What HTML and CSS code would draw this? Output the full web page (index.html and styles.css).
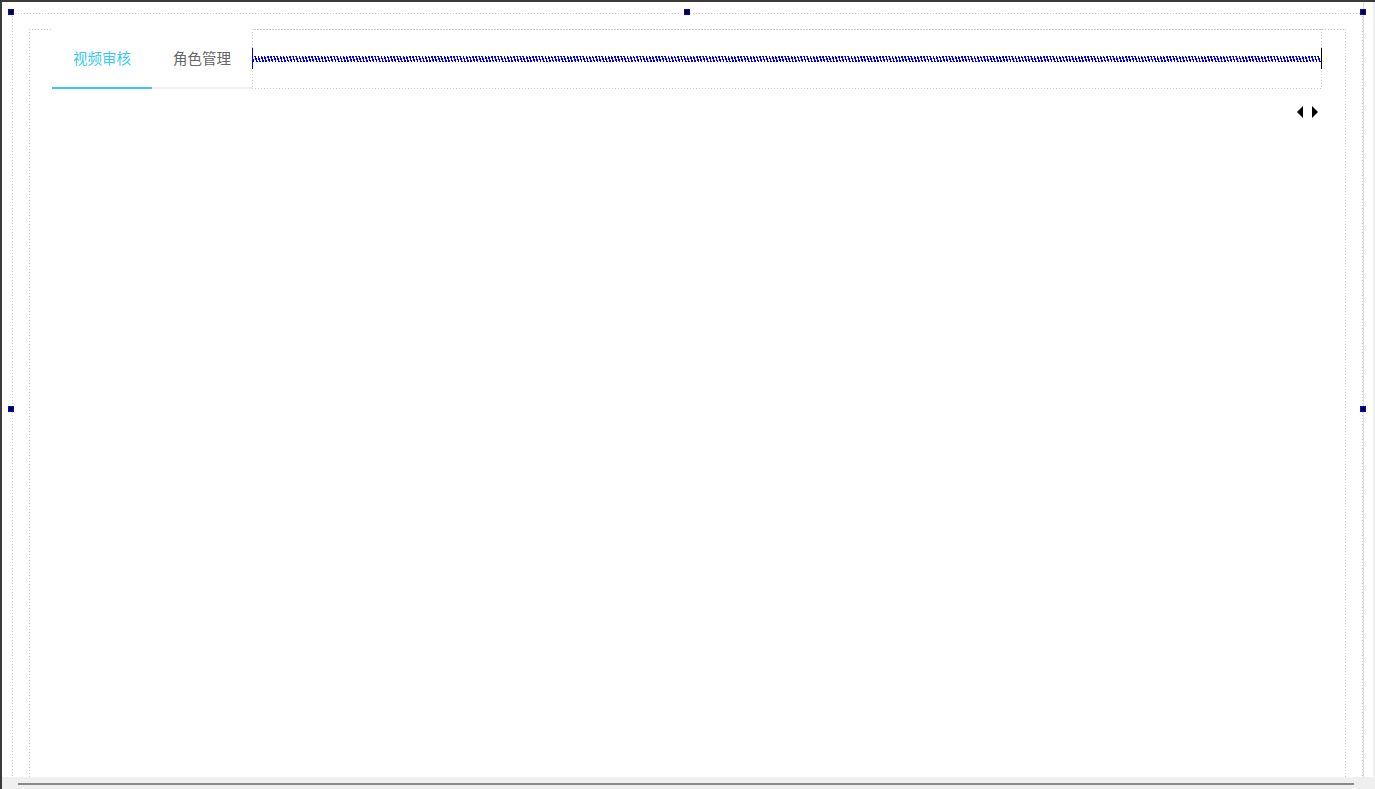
FILE: index.html
```html
<!DOCTYPE html>
<html lang="zh">
<head>
<meta charset="utf-8">
<title>Designer</title>
<link rel="stylesheet" href="styles.css">
</head>
<body>
<div class="frame">
  <div class="canvas">
    <div class="selection dotted">
      <div class="tabs-box dotted">
        <div class="tabs-header">
          <div class="tab tab-active">视频审核</div>
          <div class="tab">角色管理</div>
          <div class="nav-wrap dotted dotted-bottom">
            <div class="nav-row">
              <span class="caret caret-blue"></span>
              <span class="zigzag"></span>
              <span class="caret caret-black"></span>
            </div>
          </div>
        </div>
        <div class="arrows">
          <span class="tri tri-left"></span>
          <span class="tri tri-right"></span>
        </div>
      </div>
    </div>
  </div>
  <div class="vscroll"></div>
  <div class="hscroll"><div class="hthumb"></div></div>

  <span class="handle h-tl"></span>
  <span class="handle h-tm"></span>
  <span class="handle h-tr"></span>
  <span class="handle h-ml"></span>
  <span class="handle h-mr"></span>
</div>
</body>
</html>
```
FILE: styles.css
```css
html, body {
  margin: 0;
  padding: 0;
  background: #ffffff;
}

body {
  font-family: "Noto Sans CJK SC", "Noto Sans", sans-serif;
}

.frame {
  position: relative;
  width: 1375px;
  height: 789px;
  box-sizing: border-box;
  border-top: 2px solid #3a3a3a;
  border-left: 2px solid #3a3a3a;
  display: grid;
  grid-template-columns: 1361px 12px;
  grid-template-rows: 775px 12px;
  overflow: hidden;
  background: #ffffff;
}

.canvas {
  overflow: hidden;
  padding: 11px 0 0 10px;
}

/* sparse dotted outline: 1px dot, 2px gap */
.dotted {
  border: 1px solid transparent;
  border-bottom: none;
  background-origin: border-box;
  background-clip: border-box;
  background-repeat: no-repeat;
  background-image:
    repeating-linear-gradient(90deg, #cccccc 0 1px, transparent 1px 3px),
    repeating-linear-gradient(180deg, #cccccc 0 1px, transparent 1px 3px),
    repeating-linear-gradient(180deg, #cccccc 0 1px, transparent 1px 3px);
  background-size: 100% 1px, 1px 100%, 1px 100%;
  background-position: left top, left top, right top;
}

.dotted-bottom {
  border-bottom: 1px solid transparent;
  background-image:
    repeating-linear-gradient(90deg, #cccccc 0 1px, transparent 1px 3px),
    repeating-linear-gradient(180deg, #cccccc 0 1px, transparent 1px 3px),
    repeating-linear-gradient(180deg, #cccccc 0 1px, transparent 1px 3px),
    repeating-linear-gradient(90deg, #cccccc 0 1px, transparent 1px 3px);
  background-size: 100% 1px, 1px 100%, 1px 100%, 100% 1px;
  background-position: left top, left top, right top, left bottom;
}

.selection {
  padding: 15px 16px 0 16px;
  min-height: 820px;
}

.tabs-box {
  padding: 0 23px 0 22px;
  min-height: 800px;
}

.tabs-header {
  display: flex;
  height: 60px;
  margin-top: -1px;
}

.tab {
  width: 100px;
  height: 60px;
  box-sizing: border-box;
  background: #ffffff;
  border-bottom: 2px solid #f0f0f0;
  text-align: center;
  line-height: 57px;
  font-size: 14.5px;
  color: #666666;
}

.tab-active {
  color: #3cc8f3;
  border-bottom-color: #3cc8f3;
}

.nav-wrap {
  flex: 1;
  height: 60px;
  box-sizing: border-box;
  display: flex;
  align-items: center;
}

.nav-row {
  flex: 1;
  display: flex;
  align-items: center;
  margin: -1px -1px 0 -1px;
}

.caret {
  width: 1px;
  height: 21px;
  flex: none;
}

.caret-blue {
  background: #0000ff;
}

.caret-black {
  background: #000000;
}

.zigzag {
  flex: 1;
  height: 6px;
  background: repeating-linear-gradient(72deg, #0000ff 0 1.5px, transparent 1.5px 3px);
}

.arrows {
  display: flex;
  justify-content: flex-end;
  gap: 9px;
  margin: 17px 4px 0 0;
}

.tri {
  width: 0;
  height: 0;
  border-top: 6px solid transparent;
  border-bottom: 6px solid transparent;
}

.tri-left {
  border-right: 6px solid #000000;
}

.tri-right {
  border-left: 6px solid #000000;
}

.vscroll {
  border-left: 1px solid #dedede;
  border-right: 2px solid #eeeeee;
  background: #ffffff;
}

.hscroll {
  grid-column: 1 / 3;
  background: #efefef;
  padding: 6px 0 0 16px;
}

.hthumb {
  width: 1336px;
  height: 2px;
  background: #888888;
}

.handle {
  position: absolute;
  width: 6px;
  height: 6px;
  box-sizing: border-box;
  border: 1px solid #0000ff;
  background: #000000;
}

.h-tl { left: 6px; top: 7px; }
.h-tm { left: 682px; top: 7px; }
.h-tr { left: 1358px; top: 7px; }
.h-ml { left: 6px; top: 404px; }
.h-mr { left: 1358px; top: 404px; }
```
